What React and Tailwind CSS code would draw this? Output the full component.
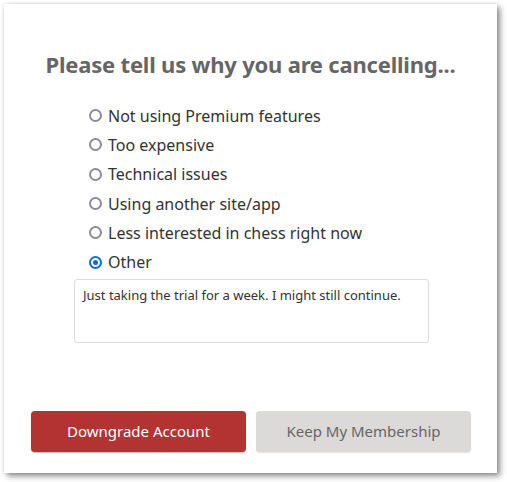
import React from "react";

const options = [
  "Not using Premium features",
  "Too expensive",
  "Technical issues",
  "Using another site/app",
  "Less interested in chess right now",
  "Other",
];

function Radio({ checked }) {
  if (checked) {
    return (
      <span className="w-[13px] h-[13px] rounded-full border-[2px] border-[#0b6be0] flex items-center justify-center shrink-0">
        <span className="w-[5px] h-[5px] rounded-full bg-[#0b6be0]" />
      </span>
    );
  }
  return <span className="w-[13px] h-[13px] rounded-full border-[2px] border-[#8e8c96] shrink-0" />;
}

export default function App() {
  return (
    <div className="w-[507px] h-[482px] bg-white pt-[4px] pl-[4px]" style={{ fontFamily: '"Noto Sans", "Open Sans", sans-serif' }}>
      <div className="w-[493px] h-[469px] bg-white shadow-[3px_3px_6px_rgba(0,0,0,0.45),0_0_3px_rgba(0,0,0,0.12)] flex flex-col">
        <h1 className="mt-[45px] h-[30px] leading-[30px] text-center text-[22px] font-bold text-[#666666] tracking-[-0.2px]">
          Please tell us why you are cancelling...
        </h1>
        <div className="mt-[22px] ml-[85px] flex flex-col">
          {options.map((o, i) => (
            <label key={o} className="h-[29.3px] flex items-center gap-[6px] text-[16px] text-[#333333]">
              <Radio checked={i === options.length - 1} />
              <span className="leading-none">{o}</span>
            </label>
          ))}
        </div>
        <div className="mt-[2px] ml-[70px] w-[355px] h-[64px] border border-[#dcdcdc] rounded-[3px] px-[8px] pt-[6px] text-[13px] text-[#333333] leading-[18px]">
          Just taking the trial for a week. I might still continue.
        </div>
        <div className="mt-[68px] ml-[27px] flex gap-[10px]">
          <button className="w-[215px] h-[41px] rounded-[4px] bg-[#b33333] text-white text-[15px] shadow-[0_1px_1px_rgba(0,0,0,0.25)]">
            Downgrade Account
          </button>
          <button className="w-[215px] h-[41px] rounded-[4px] bg-[#dbdad8] text-[#666666] text-[15px] shadow-[0_1px_1px_rgba(0,0,0,0.12)]">
            Keep My Membership
          </button>
        </div>
      </div>
    </div>
  );
}
